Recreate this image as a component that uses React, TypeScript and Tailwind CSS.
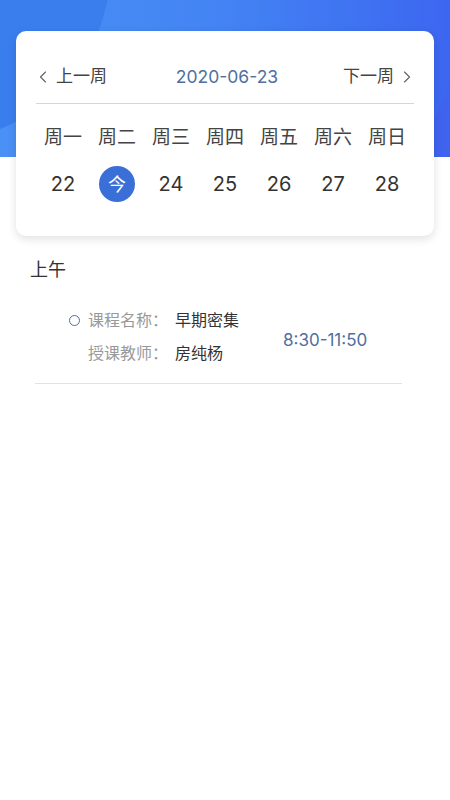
import { ChevronLeft, ChevronRight } from 'lucide-react';

const weekdays = ['周一', '周二', '周三', '周四', '周五', '周六', '周日'];
const dates = ['22', '今', '24', '25', '26', '27', '28'];

export default function App() {
  return (
    <div
      className="min-h-[800px] bg-white text-[#333]"
      style={{ fontFamily: 'Inter, "Noto Sans CJK SC", sans-serif' }}
    >
      <div className="relative h-[157px] overflow-hidden bg-gradient-to-r from-[#4a90f5] via-[#4383f3] to-[#3d66f0]">
        <div className="absolute left-[-230px] top-[-200px] h-[340px] w-[340px] rounded-full bg-[#3a7eee]" />
        <div className="absolute right-[-120px] top-[40px] h-[300px] w-[160px] rotate-[25deg] bg-[#3f63ef]" />
      </div>

      <div className="relative mx-4 -mt-[126px] rounded-[10px] bg-white px-5 pt-[29px] pb-[34px] shadow-[0_3px_10px_rgba(0,0,0,0.12)]">
        <div className="flex h-[34px] items-center justify-between">
          <div className="flex items-center gap-[3px] text-[17px] text-[#444]">
            <ChevronLeft size={20} strokeWidth={1.4} className="-ml-[3px] text-[#666]" />
            <span>上一周</span>
          </div>
          <span className="pl-[4px] text-[17.5px] text-[#4e6f9f]">2020-06-23</span>
          <div className="flex items-center gap-[3px] text-[17px] text-[#444]">
            <span>下一周</span>
            <ChevronRight size={20} strokeWidth={1.4} className="-mr-[3px] text-[#666]" />
          </div>
        </div>
        <div className="mt-[9px] h-px bg-[#d6d6d6]" />

        <div className="mt-[20px] grid grid-cols-7">
          {weekdays.map((d) => (
            <div key={d} className="flex h-[28px] items-center justify-center text-[19px] text-[#444]">
              {d}
            </div>
          ))}
        </div>
        <div className="mt-[14px] grid grid-cols-7">
          {dates.map((d) =>
            d === '今' ? (
              <div key={d} className="flex h-[36px] items-center justify-center">
                <div className="flex h-[36px] w-[36px] items-center justify-center rounded-full bg-[#3a6fd8] text-[18px] text-white">
                  {d}
                </div>
              </div>
            ) : (
              <div key={d} className="flex h-[36px] items-center justify-center text-[20px] text-[#333]">
                {d}
              </div>
            )
          )}
        </div>
      </div>

      <div className="mt-[22px] px-[30px] text-[18px] leading-[24px] text-[#333]">上午</div>

      <div className="mt-[26px] flex items-center pl-[69px]">
        <div className="flex w-[214px] flex-col gap-[9px] text-[16px] leading-[24px]">
          <div className="flex items-center">
            <span className="mr-[8px] h-[11px] w-[11px] rounded-full border-[1.5px] border-[#4e6f9f]" />
            <span className="text-[#999]">课程名称：</span>
            <span className="ml-[7px] text-[#333]">早期密集</span>
          </div>
          <div className="flex items-center pl-[19px]">
            <span className="text-[#999]">授课教师：</span>
            <span className="ml-[7px] text-[#333]">房纯杨</span>
          </div>
        </div>
        <span className="mt-[8px] text-[17px] text-[#4e6f9f]">8:30-11:50</span>
      </div>
      <div className="mx-[35px] mt-[18px] h-px w-[367px] bg-[#e2e2e2]" />
    </div>
  );
}
